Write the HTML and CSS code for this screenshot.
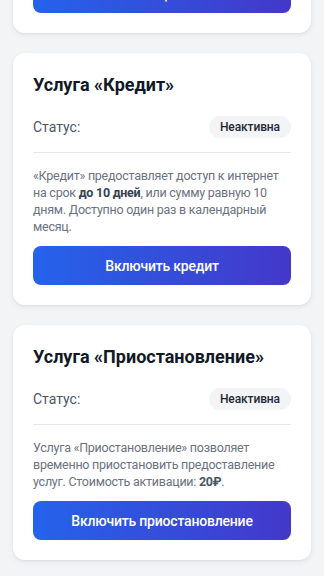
FILE: index.html
```html
<!DOCTYPE html>
<html lang="ru">
<head>
<meta charset="utf-8">
<link rel="stylesheet" href="styles.css">
</head>
<body>
<main class="list">
  <section class="card">
    <h2 class="card-title">Услуга «Обещанный платёж»</h2>
    <div class="status-row">
      <span class="status-label">Статус:</span>
      <span class="badge">Неактивна</span>
    </div>
    <p class="desc">Позволяет пользоваться услугами при недостаточном балансе в течение трёх дней.</p>
    <button class="btn">Включить обещанный платёж</button>
  </section>

  <section class="card">
    <h2 class="card-title">Услуга «Кредит»</h2>
    <div class="status-row">
      <span class="status-label">Статус:</span>
      <span class="badge">Неактивна</span>
    </div>
    <p class="desc">«Кредит» предоставляет доступ к интернет на срок <strong class="strong-dark">до 10 дней</strong>, или сумму равную 10 дням. Доступно один раз в календарный месяц.</p>
    <button class="btn">Включить кредит</button>
  </section>

  <section class="card">
    <h2 class="card-title">Услуга «Приостановление»</h2>
    <div class="status-row">
      <span class="status-label">Статус:</span>
      <span class="badge">Неактивна</span>
    </div>
    <p class="desc">Услуга «Приостановление» позволяет временно приостановить предоставление услуг. Стоимость активации: <strong class="strong">20₽</strong>.</p>
    <button class="btn">Включить приостановление</button>
  </section>
</main>
</body>
</html>
```

FILE: styles.css
```css
* { box-sizing: border-box; }
html, body {
  margin: 0;
  padding: 0;
  background: #f3f4f6;
  font-family: Roboto, "Noto Sans", sans-serif;
  -webkit-font-smoothing: antialiased;
}
body { overflow: hidden; height: 576px; }

.list {
  display: flex;
  flex-direction: column;
  gap: 20px;
  padding: 0 13px 20px;
  margin-top: -185px;
}

.card {
  background: #fff;
  border-radius: 12px;
  padding: 20px 20px 20px;
  box-shadow: 0 2px 6px rgba(17, 24, 39, 0.07), 0 1px 2px rgba(17, 24, 39, 0.04);
  display: flex;
  flex-direction: column;
}

.card-title {
  margin: 0 0 19px;
  font-size: 18px;
  line-height: 24px;
  font-weight: 700;
  color: #111827;
}

.status-row {
  display: flex;
  justify-content: space-between;
  align-items: center;
  padding-bottom: 14px;
  border-bottom: 1px solid #e5e7eb;
}

.status-label {
  font-size: 14px;
  color: #4b5563;
}

.badge {
  height: 22px;
  line-height: 22px;
  padding: 0 11px;
  border-radius: 11px;
  background: #f3f4f6;
  color: #1f2937;
  font-size: 12px;
  font-weight: 500;
  letter-spacing: -0.1px;
}

.desc {
  margin: 14px 0 11px;
  font-size: 12.5px;
  line-height: 17px;
  letter-spacing: -0.25px;
  color: #6b7280;
}

.strong-dark {
  font-weight: 700;
  color: #374151;
}

.strong {
  font-weight: 700;
  color: #4b5563;
}

.btn {
  height: 39px;
  border: none;
  border-radius: 8px;
  background: linear-gradient(90deg, #2563eb 0%, #4338ca 100%);
  color: #fff;
  font-family: inherit;
  font-size: 14px;
  font-weight: 500;
  letter-spacing: -0.2px;
  padding: 0;
}
```
